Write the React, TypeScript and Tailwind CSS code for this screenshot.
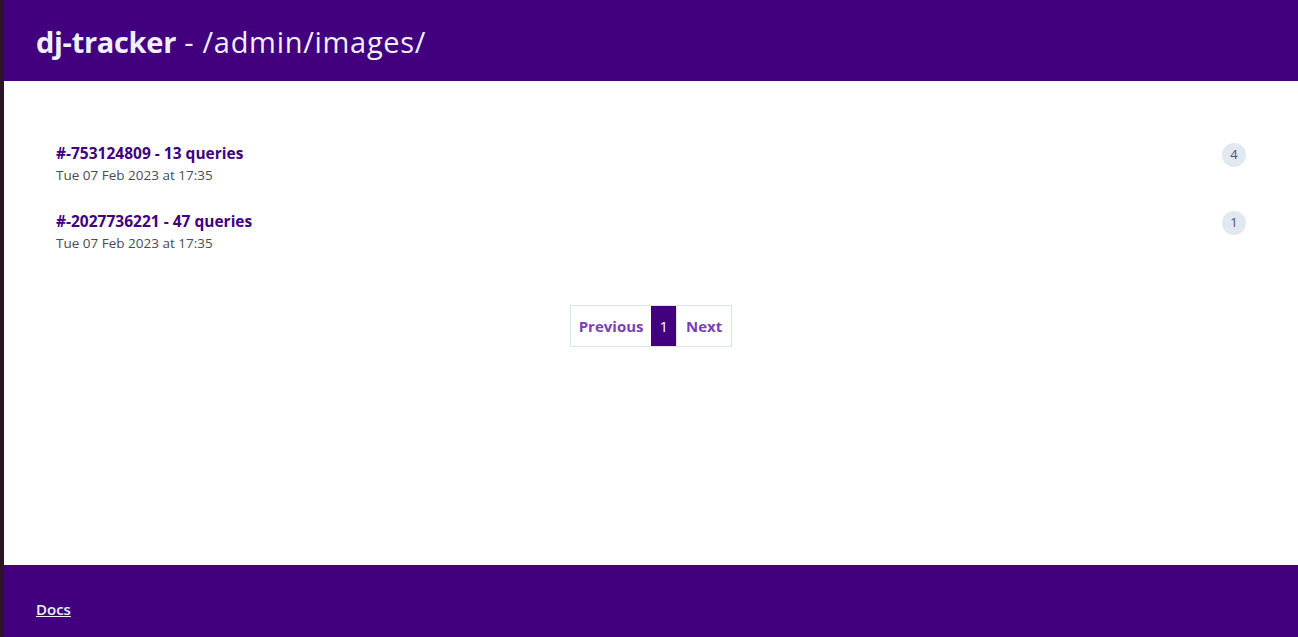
const requests = [
  { id: '#-753124809', queries: 13, date: 'Tue 07 Feb 2023 at 17:35', count: 4 },
  { id: '#-2027736221', queries: 47, date: 'Tue 07 Feb 2023 at 17:35', count: 1 },
]

export default function App() {
  return (
    <div className="flex h-[637px] bg-[#2c1626] font-['Open_Sans',sans-serif]">
      <div className="flex flex-1 flex-col bg-white ml-[4px]">
        <header className="flex h-[81px] items-center bg-[#42007e] px-8 pt-[2px] text-[#eef0ff]">
          <h1 className="text-[29px]">
            <span className="font-bold tracking-[-0.3px]">dj-tracker</span>
            <span className="tracking-[0.7px]"> - /admin/images/</span>
          </h1>
        </header>

        <main className="flex-1 px-[52px] pt-[61px]">
          <ul className="flex flex-col gap-[24px]">
            {requests.map((r) => (
              <li key={r.id} className="flex items-start justify-between">
                <div>
                  <a className="block text-[15.5px] font-bold leading-[23px] text-[#42007e]" href="#">
                    {r.id} - {r.queries} queries
                  </a>
                  <div className="text-[13.5px] leading-[21px] text-[#4a4a55]">{r.date}</div>
                </div>
                <span className="mt-[1px] flex h-6 w-6 items-center justify-center rounded-full bg-[#e2e8f0] text-[13px] text-[#4a5568]">
                  {r.count}
                </span>
              </li>
            ))}
          </ul>

          <nav className="mt-[51px] flex justify-center">
            <div className="flex h-[42px] border border-[#dde1ea] text-[15px] font-bold">
              <a className="flex items-center px-2 text-[#7a3fb0]" href="#">Previous</a>
              <span className="flex items-center bg-[#42007e] px-2 font-normal text-white">1</span>
              <a className="flex items-center border-l border-[#dde1ea] px-[9px] text-[#7a3fb0]" href="#">Next</a>
            </div>
          </nav>
        </main>

        <footer className="flex h-[72px] items-center bg-[#42007e] px-8 pt-[16px]">
          <a className="text-[15px] font-semibold text-[#eef0ff] underline" href="#">Docs</a>
        </footer>
      </div>
    </div>
  )
}
